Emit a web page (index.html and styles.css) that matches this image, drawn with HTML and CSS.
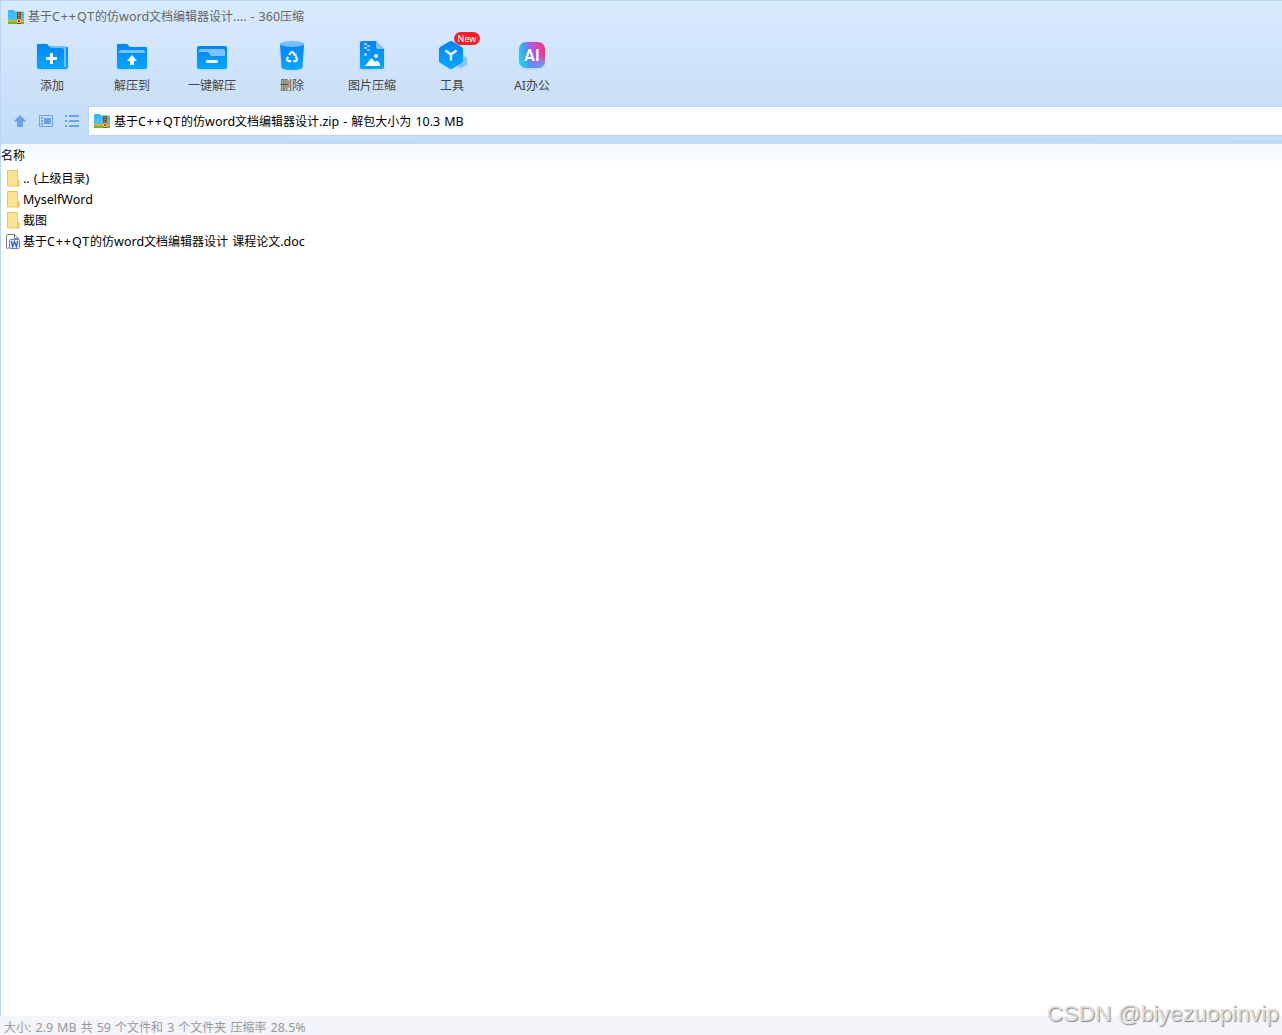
FILE: index.html
```html
<!DOCTYPE html>
<html lang="zh-CN">
<head>
  <meta charset="UTF-8">
  <meta name="viewport" content="width=device-width, initial-scale=1.0">
  <title>360压缩</title>
  <link rel="stylesheet" href="styles.css">
</head>
<body>
  <!-- shared icons -->
  <svg class="defs" width="0" height="0">
    <defs>
      <linearGradient id="blue" x1="0" y1="0" x2="0" y2="1">
        <stop offset="0" stop-color="#0084ff"/>
        <stop offset="1" stop-color="#00a8ff"/>
      </linearGradient>
      <linearGradient id="sky" x1="0" y1="0" x2="0" y2="1">
        <stop offset="0" stop-color="#38b6ff"/>
        <stop offset="1" stop-color="#43c8fa"/>
      </linearGradient>
      <linearGradient id="ai" x1="0" y1="0.6" x2="1" y2="0.3">
        <stop offset="0" stop-color="#16d5ed"/>
        <stop offset="0.3" stop-color="#459cf4"/>
        <stop offset="0.58" stop-color="#c04fe8"/>
        <stop offset="1" stop-color="#f4376f"/>
      </linearGradient>
      <radialGradient id="aiGlow" cx="0.9" cy="1" r="0.55">
        <stop offset="0" stop-color="#35c5fa"/>
        <stop offset="1" stop-color="#8385f2" stop-opacity="0"/>
      </radialGradient>
      <symbol id="zip" viewBox="0 0 16 14">
        <path d="M0 1q0-1 1-1h5l1 1.500h8q1 0 1 1V11H0z" fill="url(#sky)"/>
        <path d="M0 10h16v2H0z" fill="#ff9e22"/>
        <path d="M0 12h16v2H0z" fill="#57bf35"/>
        <path d="M9 2h4v12H9z" fill="#8d4c1c"/>
        <path d="M10 3.500h2M10 5.500h2M10 7.500h2" stroke="#c47b35"/>
        <path d="M9.500 9.500h3v3h-3z" fill="#8d4c1c" stroke="#f4c46b"/>
      </symbol>
      <symbol id="folder" viewBox="0 0 14 17">
        <path d="M1.500.500h10v9.500l1.500 1v5H1.500z" fill="#ffe394" stroke="#eac856"/>
        <path d="M11.500 16v-5l1.500-1v6z" fill="#f9d66c" stroke="#e6c04e" stroke-width=".6"/>
      </symbol>
    </defs>
  </svg>

  <div class="window">
    <div class="titlebar">
      <svg class="zip-icon" width="16" height="14"><use href="#zip"/></svg>
      <span class="title">基于<b class="wide">C++QT</b>的仿<b>word</b>文档编辑器设计<b>.... - 360</b>压缩</span>
    </div>

    <div class="toolbar">
      <div class="tool">
        <svg width="32" height="32" viewBox="0 0 32 32">
          <path d="M1 5q0-1 1-1h9l3 3h17q1 0 1 1v19q0 2-2 2H3q-2 0-2-2z" fill="url(#blue)"/>
          <path d="M14 6h14q2 0 2 2v19h-2V10q0-2-2-2H15z" fill="#74bfff"/>
          <path d="M15.500 13v11M10 18.500h11" stroke="#eff8ff" stroke-width="3"/>
        </svg>
        <span>添加</span>
      </div>
      <div class="tool">
        <svg width="32" height="32" viewBox="0 0 32 32">
          <path d="M1 5q0-1 1-1h9l3 3h16q1 0 1 1v19q0 2-2 2H3q-2 0-2-2z" fill="url(#blue)"/>
          <path d="M3 13v-1q0-2 2-2h22q2 0 2 2v1z" fill="#7bc2ff"/>
          <path d="M16 15l5 6h-3v4h-4v-4h-3z" fill="#fff"/>
        </svg>
        <span>解压到</span>
      </div>
      <div class="tool">
        <svg width="32" height="32" viewBox="0 0 32 32">
          <rect x="1" y="6" width="30" height="23" rx="2" fill="url(#blue)"/>
          <path d="M3 12v-1q0-2 2-2h22q2 0 2 2v5H15l-3-4z" fill="#7ec2ff"/>
          <rect x="10" y="20" width="12" height="3" rx="1" fill="#fff"/>
        </svg>
        <span>一键解压</span>
      </div>
      <div class="tool">
        <svg width="32" height="32" viewBox="0 0 32 32">
          <path d="M4 4h24l-1.500 23q-.2 3-10.500 3T5.500 27z" fill="url(#blue)"/>
          <ellipse cx="16" cy="4" rx="12" ry="3" fill="#75beff"/>
          <g fill="none" stroke="#fff" stroke-width="2.200">
            <path d="M13.300 15l1.300-2.200q1.400-1.500 2.800 0l1 1.600"/>
            <path d="M13.300 15l1.300-2.200q1.400-1.500 2.800 0l1 1.600" transform="rotate(120 16 17.500)"/>
            <path d="M13.300 15l1.300-2.200q1.400-1.500 2.800 0l1 1.600" transform="rotate(240 16 17.500)"/>
          </g>
          <path d="M20.500 13v3.500l-3.500-1z" fill="#fff"/>
        </svg>
        <span>删除</span>
      </div>
      <div class="tool">
        <svg width="32" height="32" viewBox="0 0 32 32">
          <path d="M4 3q0-2 2-2h14l8 8v18q0 2-2 2H6q-2 0-2-2z" fill="url(#blue)"/>
          <path d="M20 1l8 8h-6q-2 0-2-2z" fill="#83c6ff"/>
          <path d="M8 3h3v2H8zM11 5h3v2h-3zM8 7h3v2H8zM11 9h3v2h-3zM8 13h3v3H8z" fill="#8ccaff"/>
          <circle cx="20" cy="16" r="2" fill="#fff"/>
          <path d="M9 26l5.500-7q1-1 2 0l2.500 3 1-1q1-.8 2 .2L24 24v2z" fill="#fff"/>
        </svg>
        <span>图片压缩</span>
      </div>
      <div class="tool">
        <svg width="32" height="32" viewBox="0 0 32 32">
          <path d="M23 14l7 3q1 .5 1 1.500v5q0 1-1 1.500l-5 3-5-3z" fill="#82c4ff"/>
          <path d="M13.500 1.500q1.500-1 3 0l9 5.200q1.500 1 1.500 2.500v11.600q0 1.500-1.500 2.300l-9 5.400q-1.500 1-3 0l-9-5.400Q3 22.300 3 20.800V9.200q0-1.500 1.500-2.500z" fill="url(#blue)"/>
          <path d="M9.500 10.500l5.500 4 5.500-4M15 14v6.500" fill="none" stroke="#e9f7ff" stroke-width="2.400"/>
        </svg>
        <span>工具</span>
        <em class="badge">New</em>
      </div>
      <div class="tool">
        <svg width="32" height="32" viewBox="0 0 32 32">
          <rect x="3" y="2" width="26" height="26" rx="7" fill="url(#ai)"/>
          <rect x="3" y="2" width="26" height="26" rx="7" fill="url(#aiGlow)"/>
          <text class="ai-text" x="16" y="20.500" text-anchor="middle">AI</text>
        </svg>
        <span><b>AI</b>办公</span>
      </div>
    </div>

    <div class="address-row">
      <div class="nav-icons">
        <svg width="14" height="14" viewBox="0 0 14 14"><path d="M7 1l6.500 6.500H10V13H4V7.500H.5z" fill="#6aa0ed"/></svg>
        <svg width="14" height="14" viewBox="0 0 14 14">
          <path d="M.5 1.500h13v11H.5z" fill="none" stroke="#6aa0ed"/>
          <path d="M5 4h7v6H5zM2 3h2v2H2zM2 6h2v2H2zM2 9h2v2H2z" fill="#6aa0ed"/>
        </svg>
        <svg width="14" height="14" viewBox="0 0 14 14"><path d="M0 1h2v2H0zM4 1h10v2H4zM0 6h2v2H0zM4 6h10v2H4zM0 11h2v2H0zM4 11h10v2H4z" fill="#6aa0ed"/></svg>
      </div>
      <div class="address">
        <svg class="zip-icon" width="16" height="14"><use href="#zip"/></svg>
        <span>基于<b class="wide">C++QT</b>的仿<b>word</b>文档编辑器设计<b>.zip - </b>解包大小为<b> 10.3 MB</b></span>
      </div>
    </div>

    <div class="list-header">名称</div>
    <div class="file-list">
      <div class="file"><svg width="14" height="17"><use href="#folder"/></svg><span><b>.. (</b>上级目录<b>)</b></span></div>
      <div class="file"><svg width="14" height="17"><use href="#folder"/></svg><span><b>MyselfWord</b></span></div>
      <div class="file"><svg width="14" height="17"><use href="#folder"/></svg><span>截图</span></div>
      <div class="file">
        <svg width="14" height="17" viewBox="0 0 14 17">
          <path d="M2.500 15.500H1.500q-1 0-1-1v-12q0-1 1-1h7l4 4v9h-10" fill="#fff" stroke="#777b85"/>
          <path d="M8.500 1.500v4h4" fill="none" stroke="#777b85"/>
          <rect x="3.500" y="6.500" width="10" height="9" rx="1" fill="#e6ecff" stroke="#5a80f0"/>
          <path d="M5.300 8l1.300 5.500 1.900-5 1.900 5L11.700 8" fill="none" stroke="#2f5deb" stroke-width="1.300"/>
        </svg>
        <span>基于<b class="wide">C++QT</b>的仿<b>word</b>文档编辑器设计<b> </b>课程论文<b>.doc</b></span>
      </div>
    </div>

    <div class="statusbar"><span>大小<b>: 2.9 MB </b>共<b> 59 </b>个文件和<b> 3 </b>个文件夹<b> </b>压缩率<b> 28.5%</b></span></div>
    <div class="watermark">CSDN @biyezuopinvip</div>
  </div>
</body>
</html>
```
FILE: styles.css
```css
* {
  margin: 0;
  padding: 0;
  box-sizing: border-box;
}

body {
  font-family: "Noto Sans", "Noto Sans CJK SC", sans-serif;
  font-size: 12px;
  line-height: 20px;
  color: #000;
  overflow: hidden;
}

b {
  font-weight: 400;
  font-size: 12.5px;
  line-height: 1;
  white-space: pre;
  word-spacing: 0.8px;
}

.wide {
  letter-spacing: 0.9px;
}

svg {
  display: block;
  flex-shrink: 0;
}

.defs {
  position: absolute;
}

.window {
  position: relative;
  display: flex;
  flex-direction: column;
  height: 100vh;
  border-left: 1px solid #bad5f7;
  background-color: #fff;
  white-space: nowrap;
}

.titlebar {
  height: 34px;
  display: flex;
  align-items: center;
  gap: 4px;
  padding: 0 7px 2px;
  border-top: 1px solid #b8d5f3;
  background: linear-gradient(#d7eafe, #d4e7fd);
  color: #666;
}

.toolbar {
  height: 72px;
  display: flex;
  padding: 6px 0 0 11px;
  background: linear-gradient(#d4e7fd, #c9dff8);
  color: #444;
}

.tool {
  position: relative;
  width: 80px;
  display: flex;
  flex-direction: column;
  align-items: center;
  gap: 4px;
}

.tool svg {
  filter: drop-shadow(0 1px 1px rgba(40, 130, 220, 0.15));
}

.badge {
  position: absolute;
  top: -8px;
  left: 42px;
  width: 26px;
  height: 13px;
  border-radius: 7px;
  background-color: #fb1e2a;
  color: #fff;
  font-size: 9px;
  font-style: normal;
  line-height: 13px;
  text-align: center;
}

.ai-text {
  font: bold 16px Roboto, sans-serif;
  fill: #fff;
}

.address-row {
  height: 38px;
  display: flex;
  background:
    linear-gradient(#b8d6f3, #b8d6f3) 283px 36px / 135px 1px no-repeat,
    linear-gradient(#b8d6f3, #b8d6f3) 959px 33px / 135px 1px no-repeat,
    linear-gradient(#b8d6f3, #b8d6f3) 1230px 35px / 51px 1px no-repeat,
    linear-gradient(#c8dff8, #c2ddf8);
}

.nav-icons {
  display: flex;
  align-items: center;
  gap: 12px;
  width: 87px;
  padding: 0 0 8px 12px;
}

.address {
  flex: 1;
  height: 30px;
  display: flex;
  align-items: center;
  gap: 4px;
  padding-left: 5px;
  border: 1px solid #b8d5f4;
  border-right: 0;
  background-color: #fff;
}

.address span {
  padding-top: 2px;
}

.list-header {
  height: 24px;
  line-height: 24px;
  background: linear-gradient(#f3f9ff, #fff);
}

.file-list {
  flex: 1;
  padding-left: 5px;
}

.file {
  height: 21px;
  display: flex;
  align-items: center;
  gap: 3px;
}

.statusbar {
  height: 19px;
  margin-left: -1px;
  padding: 2px 0 0 4px;
  background-color: #f4f5fa;
  color: #999;
  line-height: 19px;
}

.watermark {
  position: absolute;
  right: 3px;
  bottom: 8px;
  font: 22.8px/28px "Liberation Sans", sans-serif;
  color: #dedede;
  text-shadow: 1px 1px 1px #888;
}
```
